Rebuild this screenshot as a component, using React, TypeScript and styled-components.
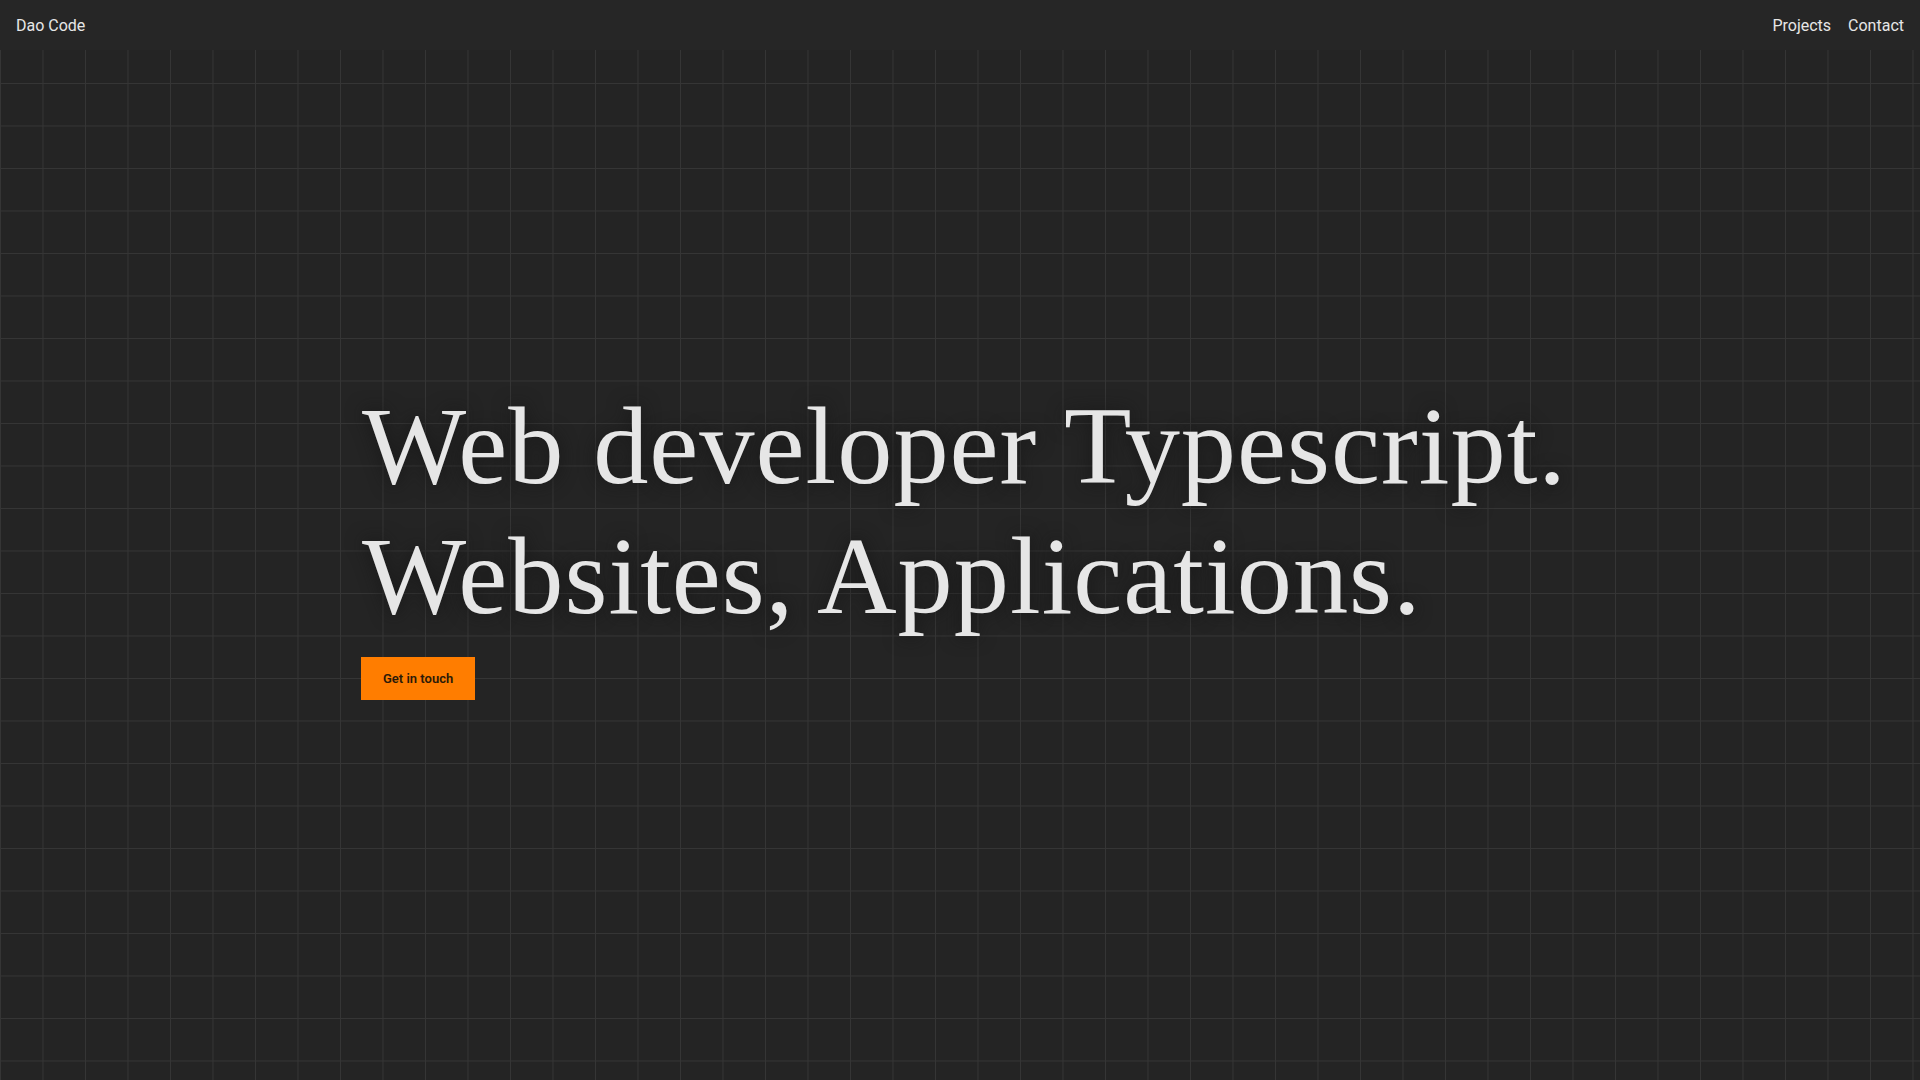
import { createGlobalStyle, styled } from "styled-components";

const GlobalStyle = createGlobalStyle`
  html, body {
    margin: 0;
    padding: 0;
  }
  body {
    background-color: #242424;
    background-image:
      linear-gradient(to right, #353535 1px, transparent 1px),
      linear-gradient(to bottom, #353535 1px, transparent 1px);
    background-size: 42.5px 42.5px;
    background-position: 0 40.5px;
    color: #e6e6e6;
    font-family: Roboto, "Liberation Sans", sans-serif;
  }
`;

const Header = styled.header`
  position: fixed;
  top: 0;
  left: 0;
  right: 0;
  height: 50px;
  padding: 0 16px;
  display: flex;
  align-items: center;
  justify-content: space-between;
  background-color: #262626;
  z-index: 10;
`;

const Brand = styled.a`
  font-size: 16px;
  color: #e6e6e6;
  text-decoration: none;
`;

const Nav = styled.nav`
  display: flex;
  gap: 17px;
`;

const NavLink = styled.a`
  font-size: 16px;
  color: #e6e6e6;
  text-decoration: none;
`;

const Hero = styled.main`
  min-height: 100vh;
  display: flex;
  flex-direction: column;
  justify-content: center;
`;

const Container = styled.section`
  width: 1200px;
  margin: 0 auto;
  display: flex;
  flex-direction: column;
  align-items: flex-start;
  gap: 16px;
`;

const Title = styled.h1`
  margin: 0 0 0 2px;
  font-family: "Liberation Serif", "Times New Roman", serif;
  font-weight: 400;
  font-size: 110.4px;
  line-height: 130px;
  letter-spacing: 1px;
  color: #e6e6e6;
  text-shadow: 0 0 18px rgba(20, 20, 20, 0.8);
  white-space: nowrap;
`;

const CtaButton = styled.button`
  height: 43px;
  margin-left: 1px;
  padding: 0 22px;
  border: none;
  background-color: #ff7d00;
  color: #2b1a08;
  font-family: Roboto, "Liberation Sans", sans-serif;
  font-weight: 600;
  font-size: 13px;
  cursor: pointer;
`;

export default function App() {
  return (
    <>
      <GlobalStyle />
      <Header>
        <Brand href="#">Dao Code</Brand>
        <Nav>
          <NavLink href="#projects">Projects</NavLink>
          <NavLink href="#contact">Contact</NavLink>
        </Nav>
      </Header>
      <Hero>
        <Container>
          <Title>
            Web developer Typescript.
            <br />
            Websites, Applications.
          </Title>
          <CtaButton>Get in touch</CtaButton>
        </Container>
      </Hero>
    </>
  );
}
